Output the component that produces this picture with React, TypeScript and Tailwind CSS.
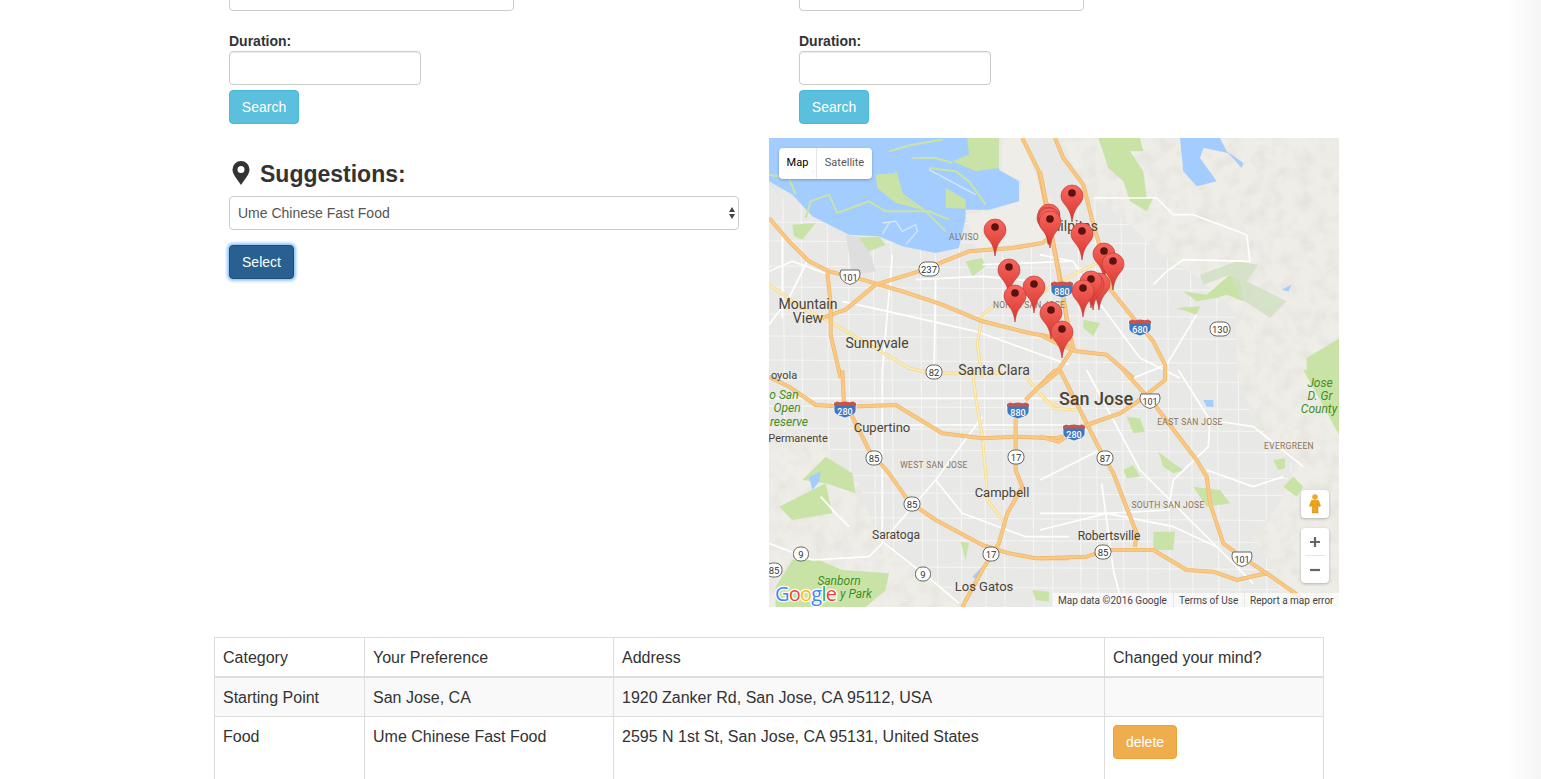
import React from 'react';

// map quadrants: coordinates below are read off 3x crops of the map
const TL = 'scale(0.3333)';
const TR = 'translate(271 0) scale(0.3333)';
const BL = 'translate(0 232) scale(0.3333)';
const BR = 'translate(271 232) scale(0.3333)';

const freeways: [string, string][] = [
  [TL, '0,240 60,310 120,370 180,400 280,425 400,460 520,500 640,550 780,585 870,600 900,625'],
  [TL, '160,540 230,515 320,440 450,400 600,340 730,330 820,315 840,300'],
  [TL, '175,400 185,500 185,590 215,720'],
  [TL, '760,0 810,100 830,200 850,300 880,450 900,600'],
  [TR, '45,0 70,60 130,140 155,240 175,310 215,460 280,540 340,610 375,680 375,720'],
  [TR, '0,100 20,200 40,320 60,430 90,590 100,630 60,690 20,720'],
  [TR, '0,590 60,620 110,640 200,650 280,720'],
  [BL, '0,20 60,50 140,105 230,110 380,105 520,190 640,205 740,200 860,205 900,195'],
  [BL, '220,0 225,105'],
  [BL, '245,130 300,240 360,310 420,395 500,450 640,525 720,550 800,565 900,565'],
  [BL, '740,100 740,300 760,350 715,430 690,520 640,600 580,711'],
  [BL, '770,90 860,0'],
  [BR, '0,565 140,560 200,540 340,540 440,600 520,605 590,630 680,610'],
  [BR, '250,0 340,100 470,270 500,320 510,400 550,520 590,550 680,610 780,680'],
  [BR, '60,0 110,100 180,240 220,310 290,490 285,530'],
  [BR, '0,200 55,215 140,165 240,130 300,90 375,30 375,0'],
  [BR, '0,50 60,0'],
];

const arterials: [string, string][] = [
  [TL, '640,720 625,620 640,530 680,500'],
  [TL, '0,440 100,510 180,550 300,620 420,690 480,705 700,705'],
  [TR, '0,470 40,440 80,420 180,370'],
  [BL, '610,0 620,80 640,200 650,310 655,390 700,450'],
  [BL, '770,20 830,90 870,110'],
  [BR, '0,70 40,115 110,120'],
];

const streets: [string, string][] = [
  [TL, '0,400 70,370 180,410'],
  [TL, '340,700 370,350'],
  [TL, '500,420 495,720'],
  [TL, '220,490 400,530 620,580 900,680'],
  [TL, '40,290 40,540'],
  [TL, '120,360 60,480 0,560'],
  [TL, '640,380 900,370'],
  [TL, '440,425 640,415 800,430'],
  [TR, '0,350 100,370 160,470 300,660 420,720'],
  [TR, '160,180 350,180 400,230 460,230 620,290 630,370 430,365 380,400 340,440'],
  [TR, '470,530 380,680 280,720'],
  [BL, '340,0 340,520 300,560 130,570 0,520'],
  [BL, '0,85 900,85'],
  [BL, '400,165 900,165'],
  [BL, '640,140 500,330 340,515 500,640 570,700'],
  [BL, '500,330 580,430 770,500 900,500'],
  [BL, '155,380 200,430 240,470'],
  [BR, '140,0 300,300 540,540 640,640'],
  [BR, '510,150 505,230 400,330 385,420 200,430 0,480'],
  [BR, '185,340 220,600 240,680'],
  [BR, '0,430 200,430 400,470 530,530'],
  [BR, '500,300 640,350 730,320'],
  [BR, '415,0 510,150 640,170 790,290'],
  [BR, '0,330 180,240'],
];

const parks: [string, string][] = [
  [TL, '270,300 330,295 350,320 300,340'],
  [TL, '70,260 140,255 100,305 75,295'],
  [TL, '590,370 640,360 650,385 610,415'],
  [TR, '175,0 300,0 310,40 270,40 310,100 320,180 340,180 320,220 270,190 250,130 205,90'],
  [TR, '430,460 500,470 570,410 600,430 610,490 560,470 530,480 470,490'],
  [TR, '130,545 180,555 160,595 130,570'],
  [TR, '410,510 480,505 470,530'],
  [TR, '800,660 900,600 900,720 800,720'],
  [BR, '790,0 900,0 900,200 840,90'],
  [BR, '250,300 280,285 300,320 260,325'],
  [BR, '355,245 400,280 430,300 400,310 370,290'],
  [BR, '260,140 300,145 315,185 280,190'],
  [BR, '460,350 540,360 570,400 500,410'],
  [BR, '700,270 735,265 735,295 715,300'],
  [BR, '730,350 760,320 790,350 770,380'],
  [BR, '340,485 405,485 400,540 340,540'],
  [BL, '30,410 170,340 190,430 70,450'],
  [BL, '100,330 170,260 250,310 260,370 170,340'],
  [BL, '70,570 150,570 220,600 360,610 350,660 290,711 20,711 20,650'],
  [BL, '575,515 600,520 590,570'],
  [BL, '790,660 840,665 840,695 800,690'],
];

const hillShades: [string, string][] = [
  [TR, '480,410 590,370 655,380 620,430 740,490 690,540 600,480 570,410 490,440'],
];

const water: [string, string][] = [
  [TL, '0,0 690,0 690,95 750,130 750,190 660,215 590,215 590,240 570,330 500,345 400,325 330,295 240,290 130,235 70,170 0,130'],
  [TR, '420,0 540,0 560,40 610,75 605,90 565,45 490,30 480,60 530,130 470,145 430,100'],
  [TR, '725,455 755,440 745,460'],
  [BL, '120,320 155,305 150,335 130,360'],
  [BL, '610,620 640,590 625,630'],
  [BR, '490,90 520,90 520,110 500,110'],
];

// marsh on top of the bay
const marsh: string[] = [
  '595,0 690,0 690,90 620,100 550,70 600,50',
  '530,150 590,185 590,212 530,210',
  '320,110 380,105 405,180 460,215 380,195 325,150',
];
const marshLines: string[] = [
  '360,40 430,20 520,5',
  '480,90 560,100 600,130 650,200',
  '110,240 125,190 180,170 205,225 300,190 350,220 480,220 540,245',
  '380,100 400,170 470,220 530,280',
  '430,60 500,60 550,75',
  '0,110 60,120 80,170',
];
const pondLines: string[] = [
  '340,255 380,250 400,280 440,260 445,280 410,320',
  '340,290 360,255',
  '480,95 620,170',
  '0,130 30,170',
];

// [x, y] of the pin head, in map coordinates
const pins: [number, number][] = [
  [226, 89], [280, 74], [279, 77], [280, 78], [281, 81], [303, 55], [313, 93], [335, 113], [344, 123],
  [240, 129], [265, 146], [246, 155], [282, 172], [293, 191], [330, 143], [324, 143], [322, 141], [314, 150],
];

const PARK = '#3f8f23';
const DISTRICT = '#8b7355';

const labels: { x: number; y: number; t: string; size: number; fill?: string; weight?: number; ls?: number; italic?: boolean }[] = [
  { x: 39, y: 171, t: 'Mountain', size: 14 },
  { x: 39, y: 185, t: 'View', size: 14 },
  { x: 108, y: 210, t: 'Sunnyvale', size: 14 },
  { x: 225, y: 237, t: 'Santa Clara', size: 14 },
  { x: 327, y: 267, t: 'San Jose', size: 18, weight: 500 },
  { x: 113, y: 294, t: 'Cupertino', size: 13 },
  { x: 233, y: 359, t: 'Campbell', size: 13 },
  { x: 127, y: 401, t: 'Saratoga', size: 12 },
  { x: 215, y: 453, t: 'Los Gatos', size: 13 },
  { x: 340, y: 402, t: 'Robertsville', size: 12 },
  { x: 304, y: 93, t: 'Milpitas', size: 14 },
  { x: 165, y: 330, t: 'WEST SAN JOSE', size: 8.5, fill: DISTRICT, ls: 0.3 },
  { x: 421, y: 287, t: 'EAST SAN JOSE', size: 8.5, fill: DISTRICT, ls: 0.3 },
  { x: 399, y: 370, t: 'SOUTH SAN JOSE', size: 8.5, fill: DISTRICT, ls: 0.3 },
  { x: 520, y: 311, t: 'EVERGREEN', size: 8.5, fill: DISTRICT, ls: 0.3 },
  { x: 195, y: 102, t: 'ALVISO', size: 8.5, fill: DISTRICT, ls: 0.3 },
  { x: 260, y: 170, t: 'NORTH SAN JOSE', size: 8.5, fill: DISTRICT, ls: 0.2 },
  { x: 15, y: 241, t: 'oyola', size: 11 },
  { x: 29, y: 304, t: 'Permanente', size: 11 },
  { x: 70, y: 447, t: 'Sanborn', size: 12, fill: PARK, italic: true },
  { x: 87, y: 460, t: 'y Park', size: 12, fill: PARK, italic: true },
  { x: 15, y: 261, t: 'o San', size: 12, fill: PARK, italic: true },
  { x: 18, y: 274, t: 'Open', size: 12, fill: PARK, italic: true },
  { x: 20, y: 288, t: 'reserve', size: 12, fill: PARK, italic: true },
  { x: 551, y: 249, t: 'Jose', size: 12, fill: PARK, italic: true },
  { x: 551, y: 262, t: 'D. Gr', size: 12, fill: PARK, italic: true },
  { x: 550, y: 275, t: 'County', size: 12, fill: PARK, italic: true },
];

const stateShields: [number, number, string][] = [
  [160, 131, '237'], [165, 234, '82'], [105, 320, '85'], [143, 366, '85'], [334, 414, '85'],
  [336, 320, '87'], [451, 191, '130'], [247, 319, '17'], [222, 416, '17'], [32, 416, '9'],
  [154, 436, '9'], [5, 432, '85'],
];
const usShields: [number, number][] = [[81, 139], [381, 263], [473, 421]];
const interstates: [number, number, string][] = [
  [293, 151, '880'], [249, 272, '880'], [371, 189, '680'], [76, 271, '280'], [305, 294, '280'],
];

const gridX = [14, 32, 58, 79, 104, 122, 151, 166, 190, 214, 233, 262, 281, 309, 326, 352, 376, 398, 421, 447, 468, 495, 520];
const gridY = [84, 103, 128, 149, 176, 198, 222, 241, 268, 290, 311, 337, 354, 379, 401, 428, 448];

const StateShield = ({ x, y, t }: { x: number; y: number; t: string }) => {
  const w = t.length > 2 ? 20 : t.length > 1 ? 16 : 15;
  return (
    <g>
      <rect x={x - w / 2} y={y - 7} width={w} height={14} rx={6.5} fill="#fff" stroke="#555" strokeWidth={0.9} />
      <text x={x} y={y + 3.5} textAnchor="middle" fontSize={9.5} fill="#333" fontFamily="Roboto, sans-serif">{t}</text>
    </g>
  );
};

const UsShield = ({ x, y }: { x: number; y: number }) => (
  <g>
    <path d={`M${x - 9} ${y - 7}h18l1 3c0 6-3 8-6 10-1 .7-2 .6-4 1.500-2-.9-3-.8-4-1.500-3-2-6-4-6-10z`} fill="#fff" stroke="#555" strokeWidth={0.9} />
    <text x={x} y={y + 3.5} textAnchor="middle" fontSize={9} fill="#333" fontFamily="Roboto, sans-serif">101</text>
  </g>
);

const Interstate = ({ x, y, t }: { x: number; y: number; t: string }) => (
  <g>
    <path d={`M${x - 11} ${y - 6}h22v7c0 5-6 6-11 8-5-2-11-3-11-8z`} fill="#3b78c4" stroke="#fff" strokeWidth={0.7} />
    <path d={`M${x - 11} ${y - 6}l3-1.500 3 .8 5-.8 5 .8 3-.8 3 1.500v2.500h-22z`} fill="#c9524d" />
    <text x={x} y={y + 6} textAnchor="middle" fontSize={9} fontWeight={500} fill="#fff" fontFamily="Roboto, sans-serif">{t}</text>
  </g>
);

const Pin = ({ x, y }: { x: number; y: number }) => (
  <g>
    <path
      d={`M${x} ${y + 29}c-1-8-3-12-6-16-3-3.500-5-6-5-10a11 11 0 0 1 22 0c0 4-2 6.500-5 10-3 4-5 8-6 16z`}
      fill="url(#pinFill)"
      stroke="#b5332d"
      strokeWidth={0.6}
    />
    <circle cx={x} cy={y} r={3.8} fill="#58120f" />
  </g>
);

const GoogleLogo = () => (
  <text x={6} y={463} fontSize={20} fontWeight={500} fontFamily="'Open Sans', sans-serif" stroke="#fff" strokeWidth={2.5} paintOrder="stroke" textLength={62}>
    <tspan fill="#4285f4">G</tspan>
    <tspan fill="#ea4335">o</tspan>
    <tspan fill="#fbbc05">o</tspan>
    <tspan fill="#4285f4">g</tspan>
    <tspan fill="#34a853">l</tspan>
    <tspan fill="#ea4335">e</tspan>
  </text>
);

const Pegman = () => (
  <svg width="14" height="20" viewBox="0 0 14 20">
    <circle cx="7" cy="3" r="2.800" fill="#f5a623" />
    <path d="M3.500 6.500h7l2 5.500-1.500.5-1-2.500V19H7.500v-6h-1v6H4.300V10L3 12.500 1.500 12z" fill="#f2a20c" stroke="#c77f06" strokeWidth="0.5" />
  </svg>
);

const MapPanel = () => (
  <div className="relative w-[570px] h-[469px] overflow-hidden bg-[#e8e8e6] shrink-0">
    <svg width="570" height="469" viewBox="0 0 570 469" className="absolute inset-0">
      <defs>
        <linearGradient id="pinFill" x1="0" y1="0" x2="0" y2="1">
          <stop offset="0" stopColor="#f7675f" />
          <stop offset="1" stopColor="#d8352e" />
        </linearGradient>
        <filter id="hills" x="0" y="0" width="100%" height="100%">
          <feTurbulence type="fractalNoise" baseFrequency="0.07" numOctaves="3" seed="7" />
          <feColorMatrix values="0 0 0 0 0.7  0 0 0 0 0.68  0 0 0 0 0.62  0 0 0 0.9 -0.36" />
        </filter>
        <clipPath id="terrain">
          <polygon points="291,0 570,0 570,469 537,469 511,454 504,430 484,398 511,365 524,328 484,281 468,232 467,175 434,143 388,113 357,83 324,60 314,47 291,0" />
          <polygon points="0,292 57,299 63,332 90,345 100,379 113,404 147,432 177,452 193,469 0,469" />
        </clipPath>
      </defs>

      {/* street grid sits under the terrain and the bay */}
      <g stroke="#f5f5f3" strokeWidth={1}>
        {gridX.map((x) => (
          <line key={`v${x}`} x1={x} y1={60} x2={x + 3} y2={469} />
        ))}
        {gridY.map((y) => (
          <line key={`h${y}`} x1={0} y1={y} x2={570} y2={y + 4} />
        ))}
      </g>
      <g transform={TL}>
        <polygon points="230,290 290,300 320,400 250,410" fill="#dddedd" />
      </g>

      <g clipPath="url(#terrain)">
        <rect width="570" height="469" fill="#efede8" />
        <rect width="570" height="469" filter="url(#hills)" />
      </g>
      <g transform={TL}>
        <polygon points="590,230 680,215 750,190 760,130 700,100 700,0 760,0 830,200 820,310 620,330" fill="#efede8" />
      </g>

      {parks.map(([tf, pts], i) => (
        <polygon key={i} transform={tf} points={pts} fill="#c9e3a7" />
      ))}
      {hillShades.map(([tf, pts], i) => (
        <polygon key={i} transform={tf} points={pts} fill="#cfe0c0" opacity={0.8} />
      ))}
      {water.map(([tf, pts], i) => (
        <polygon key={i} transform={tf} points={pts} fill="#a3ccff" />
      ))}
      <g transform={TL}>
        {marsh.map((pts) => (
          <polygon key={pts} points={pts} fill="#c9e3a7" />
        ))}
        {marshLines.map((pts) => (
          <polyline key={pts} points={pts} fill="none" stroke="#c9e3a7" strokeWidth={6} />
        ))}
        {pondLines.map((pts) => (
          <polyline key={pts} points={pts} fill="none" stroke="#d5e6fb" strokeWidth={4} />
        ))}
      </g>

      {streets.map(([tf, pts], i) => (
        <polyline key={i} transform={tf} points={pts} fill="none" stroke="#fff" strokeWidth={5} strokeLinejoin="round" />
      ))}
      {arterials.map(([tf, pts], i) => (
        <g key={i} transform={tf} fill="none" strokeLinejoin="round">
          <polyline points={pts} stroke="#f2d78c" strokeWidth={9} />
          <polyline points={pts} stroke="#fdeeb5" strokeWidth={5} />
        </g>
      ))}
      {freeways.map(([tf, pts], i) => (
        <g key={i} transform={tf} fill="none" strokeLinejoin="round">
          <polyline points={pts} stroke="#ecb468" strokeWidth={12} />
          <polyline points={pts} stroke="#fac883" strokeWidth={8.5} />
        </g>
      ))}

      <g fontFamily="Roboto, sans-serif" textAnchor="middle">
        {labels.map((l) => (
          <text
            key={l.t + l.x}
            x={l.x}
            y={l.y}
            fontSize={l.size}
            fontWeight={l.weight ?? 400}
            fontStyle={l.italic ? 'italic' : 'normal'}
            fill={l.fill ?? '#4a4438'}
            letterSpacing={l.ls}
          >
            {l.t}
          </text>
        ))}
      </g>

      {stateShields.map(([x, y, t]) => (
        <StateShield key={`${x}-${y}`} x={x} y={y} t={t} />
      ))}
      {usShields.map(([x, y]) => (
        <UsShield key={`${x}-${y}`} x={x} y={y} />
      ))}
      {interstates.map(([x, y, t]) => (
        <Interstate key={`${x}-${y}`} x={x} y={y} t={t} />
      ))}
      {pins.map(([x, y], i) => (
        <Pin key={i} x={x} y={y} />
      ))}
      <GoogleLogo />
    </svg>

    {/* map type control */}
    <div className="absolute left-[10px] top-[10px] flex h-[31px] w-[93px] rounded-sm bg-white text-[11px] font-['Roboto',sans-serif] shadow-[0_1px_3px_rgba(0,0,0,0.25)]">
      <div className="flex w-[38px] items-center justify-center border-r border-[#e6e6e6] text-black">Map</div>
      <div className="flex flex-1 items-center justify-center text-[#565656]">Satellite</div>
    </div>

    {/* pegman and zoom */}
    <div className="absolute left-[532px] top-[352px] flex h-[28px] w-[28px] items-center justify-center rounded-sm bg-white shadow-[0_1px_3px_rgba(0,0,0,0.25)]">
      <Pegman />
    </div>
    <div className="absolute left-[532px] top-[390px] flex h-[55px] w-[28px] flex-col items-center rounded-sm bg-white shadow-[0_1px_3px_rgba(0,0,0,0.25)]">
      <div className="flex h-[27px] w-full items-center justify-center">
        <svg width="12" height="12" viewBox="0 0 12 12"><path d="M1 6h10M6 1v10" stroke="#666" strokeWidth="2.200" /></svg>
      </div>
      <div className="h-px w-[20px] bg-[#e6e6e6]" />
      <div className="flex h-[27px] w-full items-center justify-center">
        <svg width="12" height="12" viewBox="0 0 12 12"><path d="M1 6h10" stroke="#666" strokeWidth="2.200" /></svg>
      </div>
    </div>

    {/* attribution */}
    <div className="absolute bottom-0 right-0 flex h-[14px] w-[286px] items-center bg-white/70 pl-[5px] text-[10px] text-[#444] font-['Roboto',sans-serif] whitespace-nowrap">
      <span className="w-[115px]">Map data ©2016 Google</span>
      <span className="h-full w-px bg-[#e8e8e8]" />
      <span className="w-[70px] pl-[5px]">Terms of Use</span>
      <span className="h-full w-px bg-[#e8e8e8]" />
      <span className="pl-[5px]">Report a map error</span>
    </div>
  </div>
);

const DurationForm = () => (
  <div>
    <input type="text" className="block h-[34px] w-[285px] rounded border border-[#ccc] bg-white" />
    <label className="mt-[20px] block text-sm font-bold leading-[20px] text-[#333]">Duration:</label>
    <input type="text" className="block h-[34px] w-[192px] rounded border border-[#ccc] bg-white shadow-[inset_0_1px_1px_rgba(0,0,0,0.075)]" />
    <button className="mt-[5px] block h-[34px] w-[70px] rounded border border-[#46b8da] bg-[#5bc0de] text-sm text-white">Search</button>
  </div>
);

const rows = [
  { category: 'Starting Point', pref: 'San Jose, CA', address: '1920 Zanker Rd, San Jose, CA 95112, USA', striped: true },
  { category: 'Food', pref: 'Ume Chinese Fast Food', address: '2595 N 1st St, San Jose, CA 95131, United States', striped: false },
];

const App = () => {
  return (
    <div className="relative h-[779px] overflow-hidden bg-white font-['Liberation_Sans',Arial,sans-serif] text-[#333]">
      <div className="-mt-[23px]">
        <div className="grid grid-cols-[570px_570px] pl-[229px]">
          <DurationForm />
          <DurationForm />
        </div>

        <div className="mt-[14px] flex pl-[229px]">
          <div className="w-[540px] shrink-0">
            <h3 className="mt-[20px] flex h-[30px] items-center pt-[2px] text-[23px] font-bold leading-[30px] text-[#333]">
              <svg width="18" height="24" viewBox="0 0 18 24" className="-mt-[2px] ml-[3px] mr-[10px]">
                <path
                  fillRule="evenodd"
                  d="M9 0a8.500 8.500 0 0 1 8.500 8.500c0 5-5 10-8.500 15.500C5.500 18.500.5 13.500.5 8.500A8.500 8.500 0 0 1 9 0zm0 5a3.500 3.500 0 1 0 0 7 3.500 3.500 0 0 0 0-7z"
                  fill="#333"
                />
              </svg>
              Suggestions:
            </h3>
            <div className="relative mt-[8px] w-[510px]">
              <select className="block h-[34px] w-full appearance-none rounded border border-[#ccc] bg-white pl-[8px] text-sm text-[#555]">
                <option>Ume Chinese Fast Food</option>
              </select>
              <svg width="8" height="14" viewBox="0 0 8 14" className="absolute right-[3px] top-[10px]">
                <path d="M4 1l3 5H1zM4 13L1 8h6z" fill="#444" />
              </svg>
            </div>
            <button className="mt-[15px] block h-[34px] w-[65px] rounded border border-[#204d74] bg-[#286090] text-sm text-white shadow-[0_0_3px_2px_#8ec5ff]">
              Select
            </button>
          </div>
          <MapPanel />
        </div>

        <table className="ml-[214px] mt-[30px] w-[1109px] table-fixed border-collapse text-base leading-[22px] text-[#333]">
          <colgroup>
            <col className="w-[150px]" />
            <col className="w-[249px]" />
            <col className="w-[491px]" />
            <col className="w-[219px]" />
          </colgroup>
          <thead>
            <tr>
              {['Category', 'Your Preference', 'Address', 'Changed your mind?'].map((h) => (
                <td key={h} className="h-[39px] border border-b-2 border-[#ddd] px-2 pt-[9px] pb-[7px] align-top">{h}</td>
              ))}
            </tr>
          </thead>
          <tbody>
            {rows.map((r) => (
              <tr key={r.category} className={r.striped ? 'bg-[#f9f9f9]' : 'bg-white'}>
                <td className="border border-[#ddd] px-2 pt-[9px] pb-[7px] align-top">{r.category}</td>
                <td className="border border-[#ddd] px-2 pt-[9px] pb-[7px] align-top">{r.pref}</td>
                <td className="border border-[#ddd] px-2 pt-[9px] pb-[7px] align-top">{r.address}</td>
                <td className="border border-[#ddd] px-2 py-2 align-top">
                  {!r.striped && (
                    <button className="mb-[30px] block h-[34px] w-[64px] rounded border border-[#eea236] bg-[#f0ad4e] text-sm text-white">delete</button>
                  )}
                </td>
              </tr>
            ))}
          </tbody>
        </table>
      </div>

      {/* soft page edge on the right */}
      <div className="pointer-events-none absolute inset-y-0 right-0 w-[34px] bg-gradient-to-r from-white to-[#f5f5f5]" />
    </div>
  );
};

export default App;
